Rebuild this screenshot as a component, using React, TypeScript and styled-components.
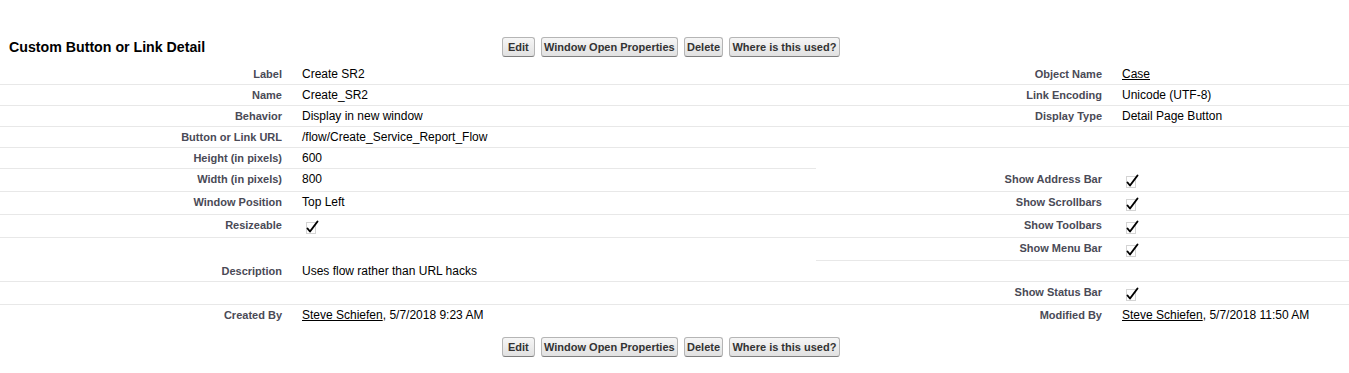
import React from 'react';
import styled, { createGlobalStyle } from 'styled-components';

const GlobalStyle = createGlobalStyle`
  body {
    margin: 0;
    background: #fff;
    font-family: 'Liberation Sans', Arial, sans-serif;
    color: #000;
  }
`;

const Page = styled.div`
  padding-top: 37px;
`;

const Header = styled.div`
  display: flex;
  align-items: center;
  height: 20px;
  margin-bottom: 7px;
`;

const Title = styled.h2`
  width: 493px;
  margin: 0;
  padding-left: 9px;
  font-size: 14.2px;
  font-weight: bold;
  color: #000;
`;

const Spacer = styled.div`
  width: 502px;
`;

const ButtonBar = styled.div`
  display: flex;
  gap: 6px;
`;

const Button = styled.button<{ $wide?: boolean }>`
  height: 20px;
  padding: 0 ${(p) => (p.$wide ? '5px' : '2.2px')};
  border: 1px solid #b5b5b5;
  border-bottom-color: #7f7f7f;
  border-radius: 3px;
  background: linear-gradient(#f6f6f6, #e1e1e1);
  font-family: 'Liberation Sans', Arial, sans-serif;
  font-size: 11px;
  font-weight: bold;
  color: #333;
  cursor: pointer;
`;

const DetailGrid = styled.div`
  display: grid;
  grid-template-columns: 292px 524px 296px 1fr;
`;

const Cell = styled.div<{ $bare?: boolean }>`
  padding: 3px 10px;
  line-height: 14px;
  border-bottom: 1px solid ${(p) => (p.$bare ? 'transparent' : '#e8e8e8')};
`;

const LabelCell = styled(Cell)`
  text-align: right;
  font-size: 11px;
  font-weight: bold;
  color: #4a4a56;
`;

const DataCell = styled(Cell)`
  font-size: 12px;
  color: #000;
`;

const Link = styled.a`
  color: #000;
  text-decoration: underline;
  cursor: pointer;
`;

const BottomBar = styled.div`
  display: flex;
  margin-top: 11px;
`;

const Check = () => (
  <svg width="21" height="16" viewBox="0 0 21 16" style={{ display: 'block' }}>
    <rect x="4.5" y="4.5" width="9" height="11" fill="none" stroke="#a8a8a8" strokeDasharray="1 1" />
    <path d="M5.5 10.5 L8 13.5 L15.5 3.5" fill="none" stroke="#000" strokeWidth="1.9" strokeLinecap="round" strokeLinejoin="round" />
  </svg>
);

type Row = {
  label?: string;
  value?: React.ReactNode;
  rightLabel?: string;
  rightValue?: React.ReactNode;
  bareLeft?: boolean;
  bareRight?: boolean;
};

const rows: Row[] = [
  { label: 'Label', value: 'Create SR2', rightLabel: 'Object Name', rightValue: <Link>Case</Link> },
  { label: 'Name', value: 'Create_SR2', rightLabel: 'Link Encoding', rightValue: 'Unicode (UTF-8)' },
  { label: 'Behavior', value: 'Display in new window', rightLabel: 'Display Type', rightValue: 'Detail Page Button' },
  { label: 'Button or Link URL', value: '/flow/Create_Service_Report_Flow' },
  { label: 'Height (in pixels)', value: '600', bareRight: true },
  { label: 'Width (in pixels)', value: '800', rightLabel: 'Show Address Bar', rightValue: <Check /> },
  { label: 'Window Position', value: 'Top Left', rightLabel: 'Show Scrollbars', rightValue: <Check /> },
  { label: 'Resizeable', value: <Check />, rightLabel: 'Show Toolbars', rightValue: <Check /> },
  { bareLeft: true, rightLabel: 'Show Menu Bar', rightValue: <Check /> },
  { label: 'Description', value: 'Uses flow rather than URL hacks' },
  { rightLabel: 'Show Status Bar', rightValue: <Check /> },
  {
    label: 'Created By',
    value: (
      <>
        <Link>Steve Schiefen</Link>, 5/7/2018 9:23 AM
      </>
    ),
    rightLabel: 'Modified By',
    rightValue: (
      <>
        <Link>Steve Schiefen</Link>, 5/7/2018 11:50 AM
      </>
    ),
    bareLeft: true,
    bareRight: true,
  },
];

const Buttons = () => (
  <ButtonBar>
    <Button $wide>Edit</Button>
    <Button>Window Open Properties</Button>
    <Button>Delete</Button>
    <Button>Where is this used?</Button>
  </ButtonBar>
);

const App: React.FC = () => (
  <>
    <GlobalStyle />
    <Page>
      <Header>
        <Title>Custom Button or Link Detail</Title>
        <Buttons />
      </Header>
      <DetailGrid>
        {rows.map((r, i) => (
          <React.Fragment key={i}>
            <LabelCell $bare={r.bareLeft}>{r.label}</LabelCell>
            <DataCell $bare={r.bareLeft}>{r.value}</DataCell>
            <LabelCell $bare={r.bareRight}>{r.rightLabel}</LabelCell>
            <DataCell $bare={r.bareRight}>{r.rightValue}</DataCell>
          </React.Fragment>
        ))}
      </DetailGrid>
      <BottomBar>
        <Spacer />
        <Buttons />
      </BottomBar>
    </Page>
  </>
);

export default App;
